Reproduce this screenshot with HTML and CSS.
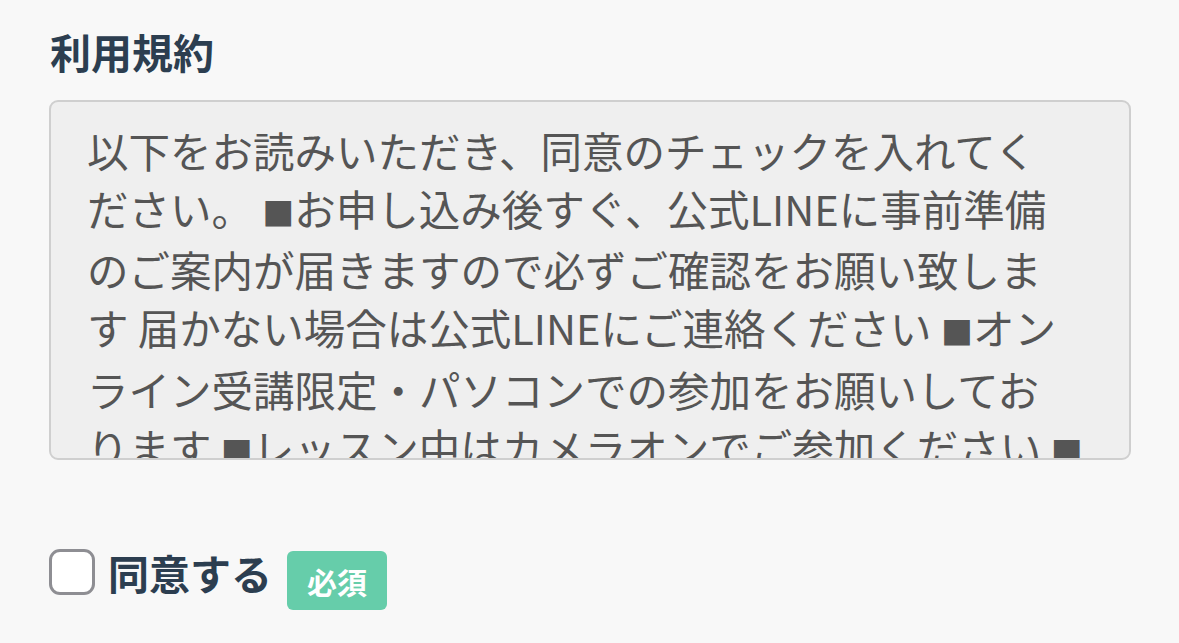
FILE: index.html
```html
<!DOCTYPE html>
<html lang="ja">
<head>
  <meta charset="UTF-8" />
  <meta name="viewport" content="width=device-width, initial-scale=1.0"/>
  <title>利用規約</title>
  <link rel="stylesheet" href="styles.css">
</head>
<body>
  <section class="terms">
    <h2 class="terms-title">利用規約</h2>
    <div class="terms-box">以下をお読みいただき、同意のチェックを入れてください。 <span class="mark">■</span>お申し込み後すぐ、公式LINEに事前準備のご案内が届きますので必ずご確認をお願い致します 届かない場合は公式LINEにご連絡ください <span class="mark">■</span>オンライン受講限定・パソコンでの参加をお願いしております <span class="mark">■</span>レッスン中はカメラオンでご参加ください <span class="mark tail">■</span></div>

    <label class="agree">
      <input type="checkbox" class="agree-check">
      <span class="agree-text">同意する</span>
      <span class="badge">必須</span>
    </label>
  </section>
</body>
</html>
```

FILE: styles.css
```css
:root {
  --bg: #f8f8f8;
  --navy: #2c3e50;
  --box: #efefef;
  --border: #cfcfcf;
  --text: #555555;
  --green: #66cdaa;
}

* {
  box-sizing: border-box;
}

body {
  margin: 0;
  padding: 0;
  background: var(--bg);
  font-family: "Noto Sans CJK JP", "Noto Sans", sans-serif;
}

.terms {
  padding: 22px 49px 0 49px;
}

.terms-title {
  margin: 0 0 20px 1px;
  font-size: 41px;
  line-height: 58px;
  font-weight: 700;
  color: var(--navy);
}

.terms-box {
  width: 1082px;
  height: 360px;
  padding: 20px 70px 0 36px;
  background: var(--box);
  border: 2px solid var(--border);
  border-radius: 9px;
  font-size: 41.5px;
  line-height: 57.7px;
  color: var(--text);
  overflow: hidden;
}

.mark {
  font-size: 32px;
}

/* last square sits past the line end, as in the source */
.mark.tail {
  letter-spacing: -28px;
}

.agree {
  display: flex;
  align-items: center;
  margin-top: 74px;
}

.agree-check {
  appearance: none;
  -webkit-appearance: none;
  width: 46px;
  height: 46px;
  margin: 0 13px 0 0;
  background: #ffffff;
  border: 3px solid #8e8e93;
  border-radius: 11px;
}

.agree-text {
  font-size: 41px;
  font-weight: 700;
  color: var(--navy);
}

.badge {
  margin-left: 15px;
  padding: 0 20px;
  height: 59px;
  display: flex;
  align-items: center;
  margin-top: 17px;
  background: var(--green);
  color: #ffffff;
  font-size: 30px;
  font-weight: 700;
  border-radius: 6px;
}
```
